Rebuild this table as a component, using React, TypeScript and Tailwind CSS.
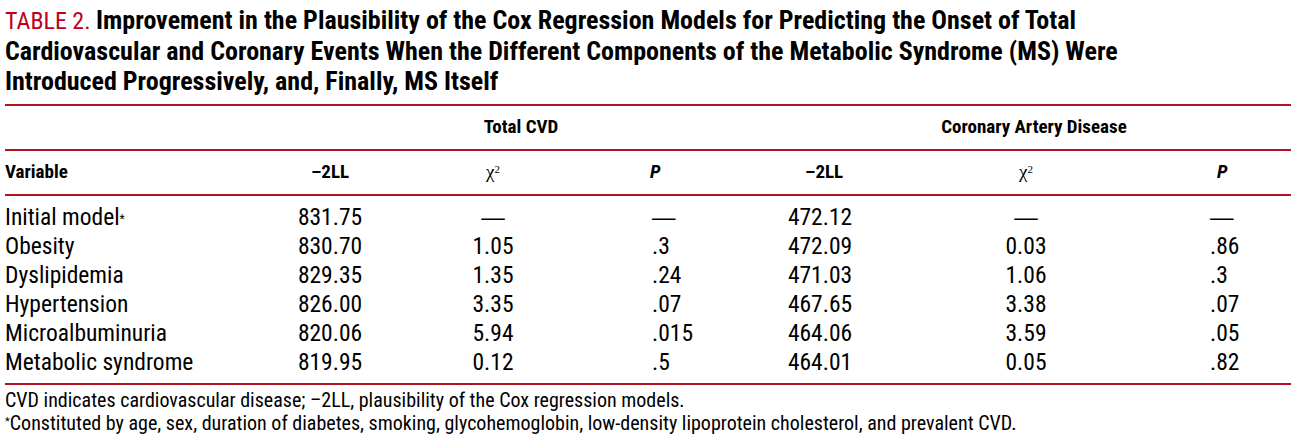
import React from "react";

const Dash = () => <span className="font-['Liberation_Sans',sans-serif] font-stretch-[100%]">—</span>;

const rows: [React.ReactNode, React.ReactNode, React.ReactNode, React.ReactNode, React.ReactNode, React.ReactNode, React.ReactNode][] = [
  [<>Initial model<sup className="text-[12px] relative -top-[2px]">*</sup></>, "831.75", <Dash />, <Dash />, "472.12", <Dash />, <Dash />],
  ["Obesity", "830.70", "1.05", ".3", "472.09", "0.03", ".86"],
  ["Dyslipidemia", "829.35", "1.35", ".24", "471.03", "1.06", ".3"],
  ["Hypertension", "826.00", "3.35", ".07", "467.65", "3.38", ".07"],
  ["Microalbuminuria", "820.06", "5.94", ".015", "464.06", "3.59", ".05"],
  ["Metabolic syndrome", "819.95", "0.12", ".5", "464.01", "0.05", ".82"],
];

const Line = () => <div className="h-[2px] bg-[#b3111f] w-[1286px]" />;
const cols = "grid grid-cols-[260px_130px_196px_186px_86px_326px_102px]";

export default function App() {
  return (
    <div className="bg-white text-black w-[1305px] h-[442px] pl-[5px] overflow-hidden font-['Roboto',sans-serif] font-stretch-[75%]">
      <div className="pt-[5px] text-[26px] leading-[30px] font-stretch-[77%]">
        <div className="whitespace-nowrap">
          <span className="text-[#c0001a] text-[24px] font-stretch-[75%]">TABLE 2. </span>
          <span className="font-bold">Improvement in the Plausibility of the Cox Regression Models for Predicting the Onset of Total</span>
        </div>
        <div className="whitespace-nowrap font-bold">
          Cardiovascular and Coronary Events When the Different Components of the Metabolic Syndrome (MS) Were
        </div>
        <div className="whitespace-nowrap font-bold">Introduced Progressively, and, Finally, MS Itself</div>
      </div>
      <div className="mt-[8px]">
        <Line />
        <div className="grid grid-cols-[260px_512px_514px] h-[43px] items-center text-[19px] font-bold">
          <div />
          <div className="text-center">Total CVD</div>
          <div className="text-center">Coronary Artery Disease</div>
        </div>
        <Line />
        <div className={`${cols} h-[43px] items-center text-[19px]`}>
          <div className="font-bold">Variable</div>
          <div className="text-center font-bold">–2LL</div>
          <div className="text-center font-['Liberation_Serif',serif]">χ<sup className="text-[11px]">2</sup></div>
          <div className="pl-[59px] font-bold italic">P</div>
          <div className="pl-[28px] font-bold">–2LL</div>
          <div className="text-center font-['Liberation_Serif',serif]">χ<sup className="text-[11px]">2</sup></div>
          <div className="pl-[28px] font-bold italic">P</div>
        </div>
        <Line />
        <div className="pt-[7px] pb-[6px] text-[23.5px]">
          {rows.map((r, i) => (
            <div key={i} className={`${cols} h-[29px] items-center leading-[29px]`}>
              <div>{r[0]}</div>
              <div className="text-center">{r[1]}</div>
              <div className="text-center">{r[2]}</div>
              <div className="pl-[61px]">{r[3]}</div>
              <div className="text-center">{r[4]}</div>
              <div className="text-center">{r[5]}</div>
              <div className="pl-[21px]">{r[6]}</div>
            </div>
          ))}
        </div>
        <Line />
      </div>
      <div className="pt-[4px] text-[20px] leading-[23px]">
        <div>CVD indicates cardiovascular disease; –2LL, plausibility of the Cox regression models.</div>
        <div className="whitespace-nowrap">
          <sup className="text-[11px]">*</sup>Constituted by age, sex, duration of diabetes, smoking, glycohemoglobin, low-density lipoprotein cholesterol, and prevalent CVD.
        </div>
      </div>
    </div>
  );
}
